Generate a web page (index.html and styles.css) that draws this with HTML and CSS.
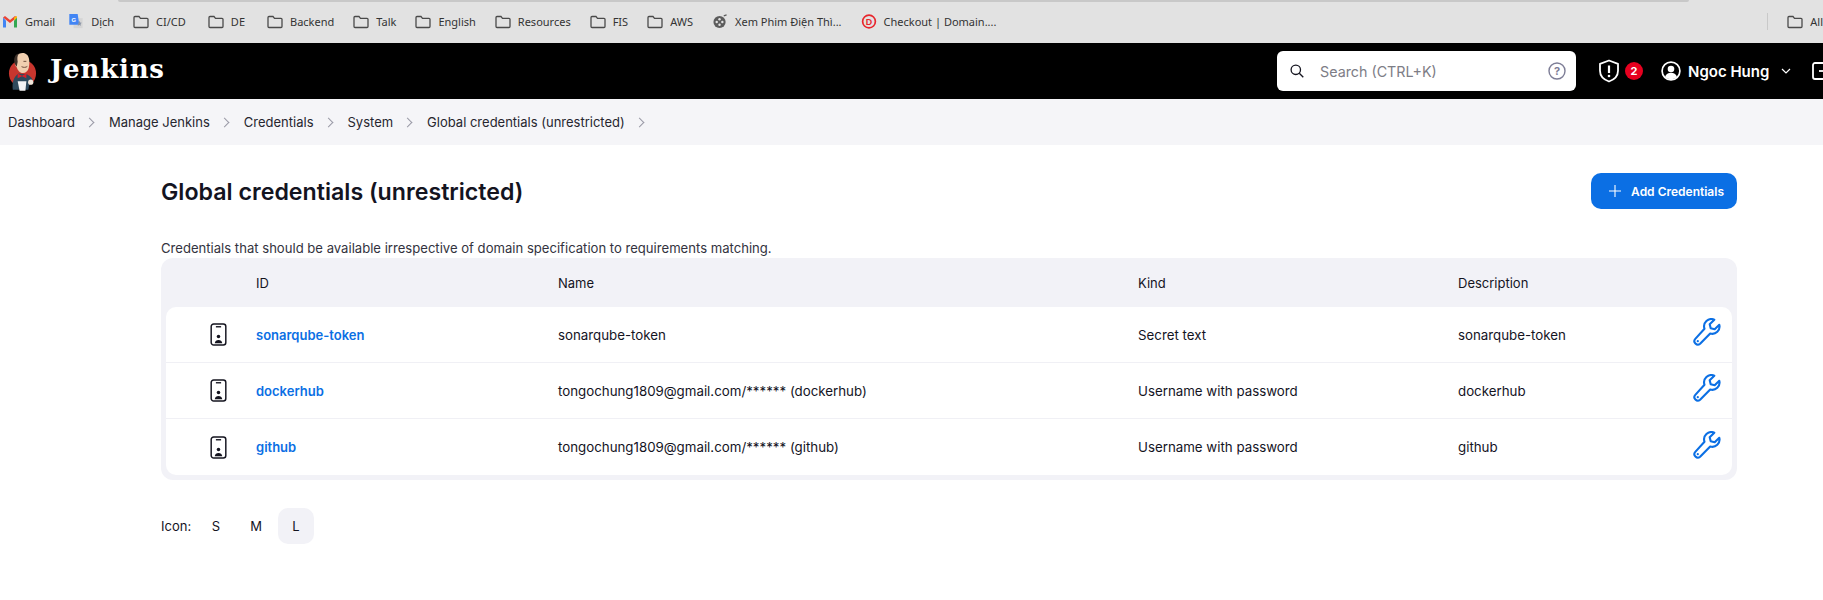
FILE: index.html
```html
<!DOCTYPE html>
<html lang="en">
<head>
    <meta charset="UTF-8">
    <meta name="viewport" content="width=device-width, initial-scale=1.0">
    <title>Global credentials (unrestricted) - Jenkins</title>
    <link rel="stylesheet" href="styles.css">
</head>
<body>
    <svg class="sprites" width="0" height="0">
        <symbol id="folder" viewBox="0 0 16 14"><path d="M1 3a1 1 0 0 1 1-1h4l1.5 1.8H14a1 1 0 0 1 1 1V12a1 1 0 0 1-1 1H2a1 1 0 0 1-1-1z" fill="none" stroke="#4a4a4a" stroke-width="1.3"/></symbol>
        <symbol id="phone" viewBox="0 0 16 22"><rect x="1" y="1" width="14" height="20" rx="2.4" fill="none" stroke="#14141f" stroke-width="1.4"/><path d="M5.5 3.6h5" stroke="#14141f" stroke-width="1.3"/><circle cx="8" cy="13" r="1.7" fill="#14141f"/><path d="M4.4 19.4c.3-2 1.7-3.1 3.6-3.1s3.300 1.100 3.600 3.100z" fill="#14141f"/></symbol>
        <symbol id="wrench" viewBox="0 0 28 28"><path d="M26.300 6.700l-4.600 4.600-4-1-1-4 4.600-4.600a7.300 7.300 0 0 0-9.800 9.100L2.300 20.900a3.400 3.400 0 0 0 4.800 4.800l10.100-10.200a7.300 7.300 0 0 0 9.100-8.800z" fill="none" stroke="#0b6fe4" stroke-width="2.100" stroke-linejoin="round"/><circle cx="4.800" cy="23.200" r="1.100" fill="#0b6fe4"/></symbol>
    </svg>

    <div class="browser-bar">
        <div class="tab-edge"></div>
        <nav class="bookmarks">
            <a class="bookmark bm-gmail">
                <svg class="bm-icon" viewBox="0 0 16 14"><path d="M1 3v10h3V6z" fill="#4285f4"/><path d="M12 6v7h3V3z" fill="#34a853"/><path d="M1 3l7 5.500L15 3l-2-1.500-5 4-5-4z" fill="#ea4335"/><path d="M12 3l3-1.500V3l-3 3z" fill="#fbbc04"/></svg>
                Gmail
            </a>
            <a class="bookmark">
                <svg class="bm-icon" viewBox="0 0 16 18"><rect x="5" y="5" width="11" height="12" fill="#d5d5d5"/><path d="M0 0h10l2 13H0z" fill="#4285f4"/><text x="2.500" y="9" font-size="7" font-weight="700" fill="#fff" font-family="Liberation Sans, sans-serif">G</text><path d="M12 8l1 2.200 2 .3-1.500 1.500.4 2.200-1.900-1-1.900 1 .4-2.200" fill="#8a94a6"/></svg>
                Dịch
            </a>
            <a class="bookmark bm-wide"><svg class="bm-icon"><use href="#folder"/></svg>CI/CD</a>
            <a class="bookmark bm-wide"><svg class="bm-icon"><use href="#folder"/></svg>DE</a>
            <a class="bookmark"><svg class="bm-icon"><use href="#folder"/></svg>Backend</a>
            <a class="bookmark"><svg class="bm-icon"><use href="#folder"/></svg>Talk</a>
            <a class="bookmark"><svg class="bm-icon"><use href="#folder"/></svg>English</a>
            <a class="bookmark"><svg class="bm-icon"><use href="#folder"/></svg>Resources</a>
            <a class="bookmark"><svg class="bm-icon"><use href="#folder"/></svg>FIS</a>
            <a class="bookmark"><svg class="bm-icon"><use href="#folder"/></svg>AWS</a>
            <a class="bookmark">
                <svg class="bm-icon" viewBox="0 0 16 16"><circle cx="7.500" cy="8.500" r="6.500" fill="#5c5c5c"/><circle cx="7.500" cy="5.500" r="1.300" fill="#e2e2e2"/><circle cx="7.500" cy="11.500" r="1.300" fill="#e2e2e2"/><circle cx="4.500" cy="8.500" r="1.300" fill="#e2e2e2"/><circle cx="10.500" cy="8.500" r="1.300" fill="#e2e2e2"/><path d="M12 2l3-1" stroke="#5c5c5c" stroke-width="1.400"/></svg>
                Xem Phim Điện Thì...
            </a>
            <a class="bookmark">
                <svg class="bm-icon" viewBox="0 0 16 16"><circle cx="8" cy="8" r="6.800" fill="none" stroke="#e8262c" stroke-width="1.800"/><text x="8" y="11.500" text-anchor="middle" font-size="9.500" font-weight="700" fill="#e8262c" font-family="Liberation Sans, sans-serif">D</text></svg>
                Checkout | Domain....
            </a>
            <span class="bm-sep"></span>
            <a class="bookmark"><svg class="bm-icon"><use href="#folder"/></svg>All</a>
        </nav>
    </div>

    <header class="page-header">
        <a class="brand">
            <svg class="butler" viewBox="0 0 30 42">
                <circle cx="15" cy="23" r="14" fill="#c8362e"/>
                <path d="M5 40c-1-8 1-14 6-17l9 1c4 2 6 5 6 9l-4 2-1 5H8z" fill="#2f4a5c"/>
                <path d="M9 5c2-3.500 8-4.500 11-1 2.500 3 2.500 9 1.500 13-.8 3.200-3 5.500-6 5.500-3.500 0-5.500-3-6.500-6-1.500-.5-2-3.500-.7-4.500z" fill="#f0cfb0"/>
                <path d="M7 13C5.500 8 7 3.500 11 2.500 9.500 5 9.500 8 10 11l-1 5z" fill="#3d3029"/>
                <path d="M16 10.500h3M14 16c2 1 4.500 1 6-.3" stroke="#6b4a3a" stroke-width="1" fill="none"/>
                <path d="M10 23l4.500 2.500L19 23v5l-4.500-2-4.500 2z" fill="#d8202a"/>
                <path d="M10 31h9l-1 10h-6z" fill="#f4f4f4"/>
                <circle cx="23.500" cy="32" r="2.700" fill="#f0e4d8"/>
            </svg>
            <span class="brand-name">Jenkins</span>
        </a>
        <div class="search-box">
            <svg class="search-icon" viewBox="0 0 14 14"><circle cx="5.800" cy="5.800" r="4.700" fill="none" stroke="#14141f" stroke-width="1.300"/><path d="M9.300 9.300l4 4" stroke="#14141f" stroke-width="1.300"/></svg>
            <span class="search-text">Search (CTRL+K)</span>
            <svg class="help-icon" viewBox="0 0 18 18"><circle cx="9" cy="9" r="8" fill="none" stroke="#7d7d96" stroke-width="1.400"/><text x="9" y="13" text-anchor="middle" font-size="11" font-weight="700" fill="#7d7d96" font-family="Inter, sans-serif">?</text></svg>
        </div>
        <div class="header-actions">
            <a class="monitor">
                <svg class="shield" viewBox="0 0 22 24"><path d="M11 1.500l9 3.300v7c0 5-3.500 8.800-9 10.700-5.500-1.900-9-5.700-9-10.700v-7z" fill="none" stroke="#fff" stroke-width="1.800" stroke-linejoin="round"/><path d="M11 6.500v7.500" stroke="#fff" stroke-width="2.200"/><circle cx="11" cy="17" r="1.300" fill="#fff"/></svg>
                <span class="badge">2</span>
            </a>
            <a class="user">
                <svg class="user-icon" viewBox="0 0 20 20"><circle cx="10" cy="10" r="8.900" fill="none" stroke="#fff" stroke-width="1.700"/><circle cx="10" cy="8" r="3.300" fill="#fff"/><path d="M4 16c1-3 3.200-4.200 6-4.200s5 1.200 6 4.200c-3.500 3-8.500 3-12 0z" fill="#fff"/></svg>
                <span class="user-name">Ngoc Hung</span>
                <svg class="user-caret" viewBox="0 0 10 6"><path d="M1 1l4 4 4-4" fill="none" stroke="#fff" stroke-width="1.200"/></svg>
            </a>
            <svg class="logout" viewBox="0 0 20 20"><path d="M19 2H4a2 2 0 0 0-2 2v12a2 2 0 0 0 2 2h15" fill="none" stroke="#fff" stroke-width="1.800"/><path d="M8 10h12" stroke="#fff" stroke-width="1.800"/></svg>
        </div>
    </header>

    <nav class="breadcrumbs">
        <a>Dashboard</a><span class="crumb-sep"></span>
        <a>Manage Jenkins</a><span class="crumb-sep"></span>
        <a>Credentials</a><span class="crumb-sep"></span>
        <a>System</a><span class="crumb-sep"></span>
        <a>Global credentials (unrestricted)</a><span class="crumb-sep"></span>
    </nav>

    <main class="content">
        <div class="title-row">
            <h1>Global credentials (unrestricted)</h1>
            <a class="add-btn">
                <svg viewBox="0 0 14 14"><path d="M7 1v12M1 7h12" stroke="#fff" stroke-width="1.100"/></svg>
                Add Credentials
            </a>
        </div>
        <p class="intro">Credentials that should be available irrespective of domain specification to requirements matching.</p>

        <div class="table-wrap">
            <table class="cred-table">
                <colgroup>
                    <col class="col-icon"><col class="col-id"><col class="col-name"><col class="col-kind"><col>
                    <col class="col-action">
                </colgroup>
                <thead>
                    <tr><th></th><th>ID</th><th>Name</th><th>Kind</th><th>Description</th><th></th></tr>
                </thead>
                <tbody>
                    <tr>
                        <td class="cell-icon"><svg class="phone"><use href="#phone"/></svg></td>
                        <td><a class="cred-link">sonarqube-token</a></td>
                        <td>sonarqube-token</td>
                        <td>Secret text</td>
                        <td>sonarqube-token</td>
                        <td class="cell-action"><svg class="wrench"><use href="#wrench"/></svg></td>
                    </tr>
                    <tr>
                        <td class="cell-icon"><svg class="phone"><use href="#phone"/></svg></td>
                        <td><a class="cred-link">dockerhub</a></td>
                        <td>tongochung1809@gmail.com/****** (dockerhub)</td>
                        <td>Username with password</td>
                        <td>dockerhub</td>
                        <td class="cell-action"><svg class="wrench"><use href="#wrench"/></svg></td>
                    </tr>
                    <tr>
                        <td class="cell-icon"><svg class="phone"><use href="#phone"/></svg></td>
                        <td><a class="cred-link">github</a></td>
                        <td>tongochung1809@gmail.com/****** (github)</td>
                        <td>Username with password</td>
                        <td>github</td>
                        <td class="cell-action"><svg class="wrench"><use href="#wrench"/></svg></td>
                    </tr>
                </tbody>
            </table>
        </div>

        <div class="icon-sizes">
            <span class="icon-label">Icon:</span>
            <a class="size-btn">S</a>
            <a class="size-btn">M</a>
            <a class="size-btn size-active">L</a>
        </div>
    </main>
</body>
</html>
```

FILE: styles.css
```css
* {
    box-sizing: border-box;
}
html, body {
    overflow: hidden;
}
body {
    margin: 0;
    height: 600px;
    background-color: #fff;
    color: #14141f;
    font-family: Inter, sans-serif;
    font-size: 13px;
}
.sprites {
    position: absolute;
}

/* browser chrome */
.browser-bar {
    height: 43px;
    background-color: #e2e2e2;
    overflow: hidden;
    white-space: nowrap;
}
.tab-edge {
    height: 2px;
    margin: 0 134px 0 118px;
    background-color: #c8c8c8;
    border-radius: 0 0 4px 4px;
}
.bookmarks {
    display: flex;
    align-items: center;
    gap: 19px;
    height: 41px;
    padding: 0 0 2px 2px;
    font-family: "Noto Sans", sans-serif;
    font-size: 11px;
    color: #333;
}
.bookmark {
    display: flex;
    align-items: center;
    gap: 7px;
}
.bm-gmail {
    margin-right: -6px;
}
.bm-wide {
    margin-right: 3px;
}
.bm-icon {
    width: 16px;
    height: 15px;
    flex: none;
}
.bm-sep {
    width: 1px;
    height: 17px;
    margin-left: auto;
    background-color: #c9c9c9;
}

/* jenkins header */
.page-header {
    display: flex;
    align-items: center;
    height: 56px;
    padding-left: 8px;
    background-color: #000;
    color: #fff;
}
.brand {
    display: flex;
    align-items: center;
    gap: 13px;
}
.butler {
    width: 29px;
    height: 41px;
}
.brand-name {
    font-family: "DejaVu Serif", serif;
    font-weight: 700;
    font-size: 26px;
    letter-spacing: 0.8px;
    line-height: 30px;
    margin-top: -4px;
}
.search-box {
    display: flex;
    align-items: center;
    flex: none;
    width: 299px;
    height: 40px;
    margin-left: auto;
    padding: 0 10px 0 13px;
    border-radius: 6px;
    background-color: #fff;
}
.search-icon {
    width: 14px;
    height: 14px;
}
.search-text {
    flex: 1;
    margin-left: 16px;
    font-size: 14.300px;
    color: #7d7d86;
}
.help-icon {
    width: 18px;
    height: 18px;
}
.header-actions {
    display: flex;
    align-items: center;
    flex: none;
    width: 247px;
    padding-left: 22px;
}
.monitor {
    display: flex;
    align-items: center;
    gap: 5px;
}
.shield {
    width: 22px;
    height: 24px;
}
.badge {
    width: 18px;
    height: 18px;
    border-radius: 50%;
    background-color: #e6001f;
    font-size: 11px;
    font-weight: 700;
    line-height: 18px;
    text-align: center;
}
.user {
    display: flex;
    align-items: center;
    margin-left: 18px;
    font-size: 15px;
    font-weight: 600;
}
.user-name {
    width: 83px;
    white-space: nowrap;
}
.user-icon {
    width: 20px;
    height: 20px;
    margin-right: 7px;
}
.user-caret {
    width: 10px;
    height: 6px;
    margin-left: 10px;
}
.logout {
    flex: none;
    width: 20px;
    height: 20px;
    margin-left: 20px;
}

/* breadcrumbs */
.breadcrumbs {
    display: flex;
    align-items: center;
    height: 46px;
    padding-left: 8px;
    background-color: #f5f5f8;
    color: #26262f;
}
.crumb-sep {
    width: 7px;
    height: 7px;
    margin: 0 16px 0 11px;
    border-top: 1px solid #9a9aa6;
    border-right: 1px solid #9a9aa6;
    transform: rotate(45deg);
}

/* main */
.content {
    padding: 28px 86px 0 161px;
}
.title-row {
    display: flex;
    align-items: center;
    justify-content: space-between;
    height: 36px;
}
h1 {
    margin: 2px 0 0;
    font-size: 23.200px;
    font-weight: 600;
}
.add-btn {
    display: flex;
    align-items: center;
    gap: 9px;
    height: 36px;
    padding: 0 13px 0 17px;
    border-radius: 10px;
    background-color: #0b6fe4;
    color: #fff;
    font-size: 12px;
    font-weight: 600;
}
.add-btn svg {
    width: 14px;
    height: 14px;
}
.intro {
    margin: 29px 0 0;
    height: 20px;
    font-size: 13.100px;
    line-height: 20px;
    color: #333340;
}
.table-wrap {
    padding: 0 5px 5px;
    border-radius: 12px;
    background-color: #f2f2f7;
}
.cred-table {
    width: 100%;
    border-collapse: separate;
    border-spacing: 0;
    table-layout: fixed;
}
.col-icon {
    width: 90px;
}
.col-id {
    width: 302px;
}
.col-name {
    width: 580px;
}
.col-kind {
    width: 320px;
}
.col-action {
    width: 70px;
}
.cred-table th {
    height: 49px;
    padding: 0;
    font-weight: 400;
    text-align: left;
}
.cred-table td {
    height: 56px;
    padding: 0;
    background-color: #fff;
    border-bottom: 1px solid #f0f0f5;
    font-size: 13.300px;
}
.cred-table tbody tr:last-child td {
    border-bottom: none;
}
.cred-table tbody tr:first-child td:first-child {
    border-top-left-radius: 10px;
}
.cred-table tbody tr:first-child td:last-child {
    border-top-right-radius: 10px;
}
.cred-table tbody tr:last-child td:first-child {
    border-bottom-left-radius: 10px;
}
.cred-table tbody tr:last-child td:last-child {
    border-bottom-right-radius: 10px;
}
.cell-icon {
    padding-left: 44px !important;
}
.phone {
    display: block;
    width: 17px;
    height: 23px;
}
.cred-link {
    color: #0b6fe4;
    font-size: 13px;
    font-weight: 600;
}
.cell-action {
    padding-left: 31px !important;
}
.wrench {
    display: block;
    width: 28px;
    height: 28px;
    margin-top: -5px;
}
.icon-sizes {
    display: flex;
    align-items: center;
    margin-top: 28px;
    font-size: 13px;
}
.icon-label {
    width: 35px;
}
.size-btn {
    width: 40px;
    height: 36px;
    line-height: 36px;
    text-align: center;
}
.size-active {
    width: 36px;
    margin-left: 2px;
    border-radius: 10px;
    background-color: #f2f2f7;
}
```
